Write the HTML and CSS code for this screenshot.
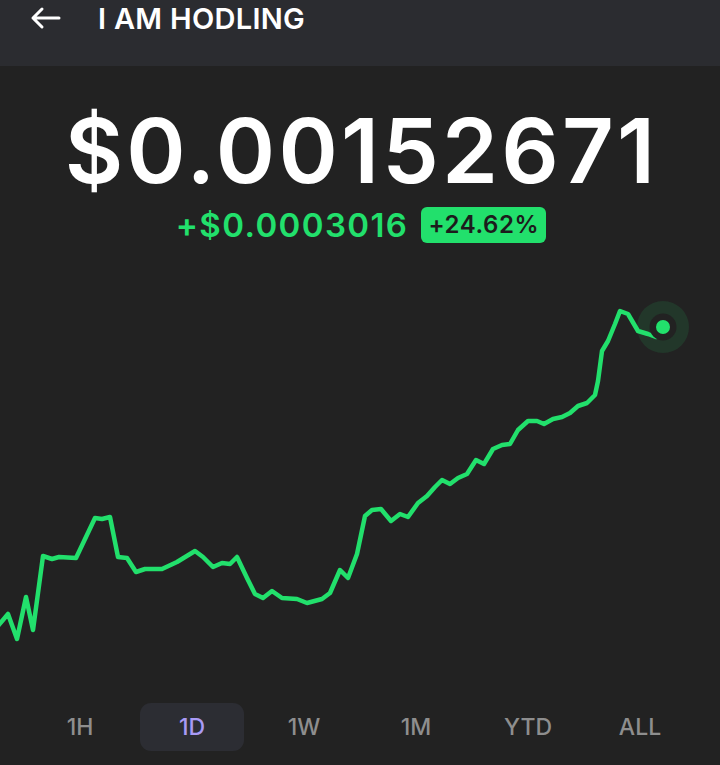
FILE: index.html
```html
<!DOCTYPE html>
<html>
<head>
<meta charset="utf-8">
<link rel="stylesheet" href="styles.css">
</head>
<body>
<div class="app">
  <header class="topbar">
    <svg class="back" width="32" height="24" viewBox="0 0 32 24"><path d="M30 12H4M13 3L4 12l9 9" fill="none" stroke="#fff" stroke-width="3" stroke-linecap="round" stroke-linejoin="round"/></svg>
    <h1 class="title">I AM HODLING</h1>
  </header>
  <section class="price">
    <div class="value">$0.00152671</div>
    <div class="change">
      <span class="delta">+$0.0003016</span>
      <span class="badge">+24.62%</span>
    </div>
  </section>
  <svg class="chart" width="720" height="430" viewBox="0 260 720 430">
    <polyline fill="none" stroke="#22e06c" stroke-width="4.5" stroke-linejoin="round" stroke-linecap="round"
      points="-2,625 8,613 17,638 26,596 33,629 43,555 52,558 59,556 76,557 95,517 102,518 110,516 118,556 127,557 136,571 145,568 162,568 177,561 195,550 203,556 213,566 222,562 230,563 237,556 247,577 255,593 263,597 272,590 282,597 297,598 307,602 322,598 330,592 340,569 348,577 357,553 365,515 372,509 381,508 391,520 400,513 408,516 418,502 427,495 435,486 442,479 450,483 458,477 467,473 476,459 484,463 493,448 502,444 510,443 518,429 528,420 537,420 544,423 553,418 562,416 570,412 578,405 587,402 595,394 598,380 602,350 608,340 615,323 620,310 628,313 638,330 648,333 656,336"/>
    <circle cx="663" cy="326" r="26" fill="#22e06c" fill-opacity="0.11"/>
    <circle cx="663" cy="326" r="13.5" fill="#222222"/>
    <circle cx="663" cy="326" r="7" fill="#22e06c"/>
  </svg>
  <nav class="ranges">
    <span class="range">1H</span>
    <span class="range active">1D</span>
    <span class="range">1W</span>
    <span class="range">1M</span>
    <span class="range">YTD</span>
    <span class="range">ALL</span>
  </nav>
</div>
</body>
</html>
```

FILE: styles.css
```css
* { box-sizing: border-box; }
html, body { margin: 0; padding: 0; }
body {
  background: #222222;
  font-family: Inter, "Liberation Sans", sans-serif;
  color: #fff;
  width: 720px;
  height: 765px;
  overflow: hidden;
}
.app { display: flex; flex-direction: column; }
.topbar {
  height: 66px;
  background: #2b2c30;
  display: flex;
  align-items: flex-start;
  padding: 0 0 0 29px;
}
.back { margin-top: 6px; }
.title {
  margin: 0 0 0 37px;
  font-size: 29px;
  font-weight: 600;
  line-height: 38px;
  letter-spacing: 0.3px;
}
.price {
  display: flex;
  flex-direction: column;
  align-items: center;
  padding-top: 40px;
}
.value {
  font-size: 90px;
  font-weight: 600;
  line-height: 90px;
  letter-spacing: 3.2px;
  padding-left: 3px;
}
.change {
  display: flex;
  align-items: center;
  gap: 13px;
  margin-top: 10px;
  padding-left: 2px;
}
.delta {
  color: #22e06c;
  font-size: 33px;
  font-weight: 600;
  line-height: 38px;
  letter-spacing: 1.4px;
}
.badge {
  background: #22e06c;
  color: #1c1c1c;
  font-size: 24px;
  font-weight: 600;
  line-height: 36px;
  padding: 0 7px;
  letter-spacing: 0.6px;
  border-radius: 6px;
}
.chart { display: block; margin-top: 17px; }
.ranges {
  display: flex;
  padding: 12px 24px 0;
}
.range {
  width: 112px;
  height: 48px;
  margin: 0 4px;
  display: flex;
  align-items: center;
  justify-content: center;
  font-size: 23px;
  font-weight: 500;
  color: #8e8e8e;
  border-radius: 11px;
}
.range.active {
  background: #2c2d33;
  color: #a99af5;
}
```
